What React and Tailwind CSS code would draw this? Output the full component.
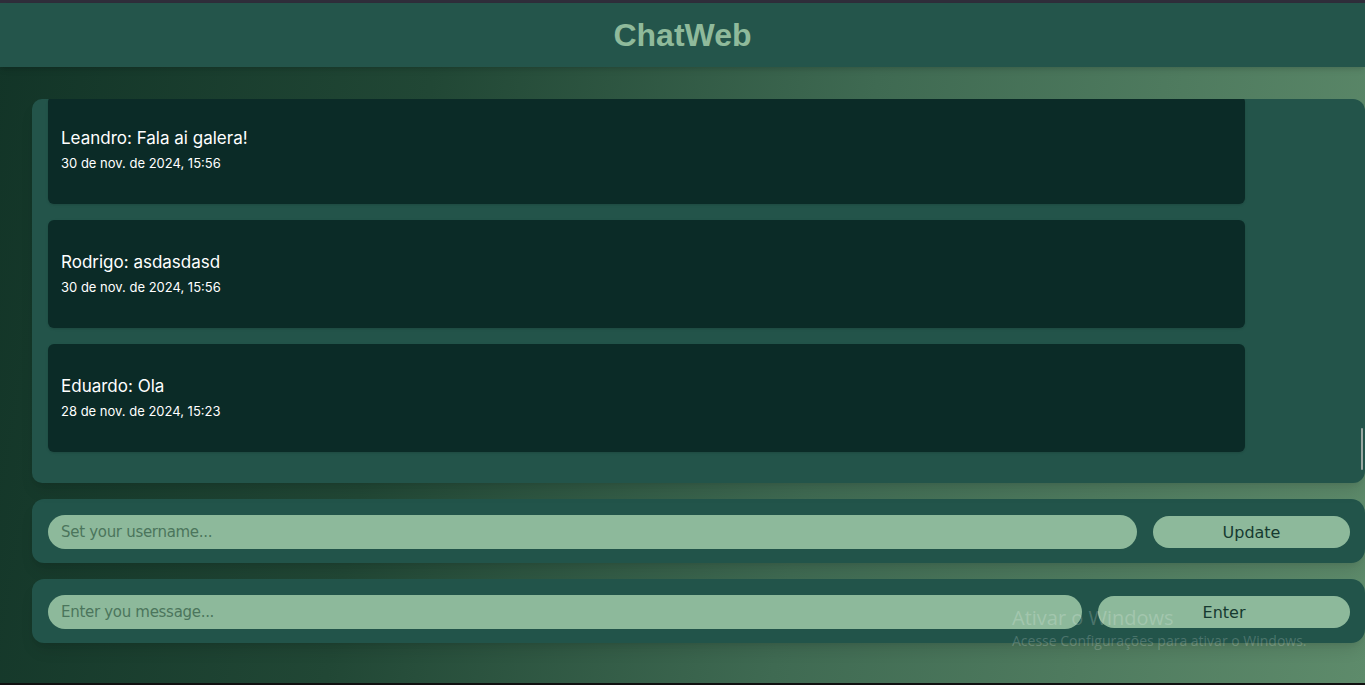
import { useState } from "react";

const messages = [
  { user: "Leandro", text: "Fala ai galera!", date: "30 de nov. de 2024, 15:56" },
  { user: "Rodrigo", text: "asdasdasd", date: "30 de nov. de 2024, 15:56" },
  { user: "Eduardo", text: "Ola", date: "28 de nov. de 2024, 15:23" },
];

export default function App() {
  const [username, setUsername] = useState("");
  const [message, setMessage] = useState("");

  return (
    <div className="relative h-screen flex flex-col overflow-hidden bg-[linear-gradient(100deg,#123427_0%,#214735_30%,#3f6a52_60%,#5e8b6b_100%)]">
      <div className="h-[3px] bg-[#2f2d3a]" />
      <header className="h-[64px] bg-[#24554b] flex items-center justify-center shadow-md">
        <h1
          className="text-[32px] font-bold text-[#8fba9b]"
          style={{ fontFamily: '"Liberation Sans", Arial, sans-serif' }}
        >
          ChatWeb
        </h1>
      </header>

      <main className="flex-1 flex flex-col gap-4 pl-8 pt-8">
        <section className="relative h-[384px] bg-[#23544a] rounded-l-[10px] rounded-r-[12px] overflow-hidden shadow-lg">
          <div className="flex flex-col gap-4 pl-4 -mt-[3px]">
            {messages.map((m) => (
              <div
                key={m.user}
                className="w-[1197px] h-[108px] bg-[#0b2b27] rounded-md flex flex-col justify-center gap-[5px] px-[13px] shadow"
                style={{ fontFamily: "Inter, sans-serif" }}
              >
                <p className="text-[17px] text-white leading-5">
                  {m.user}: {m.text}
                </p>
                <p className="text-[13px] text-white leading-5">{m.date}</p>
              </div>
            ))}
          </div>
          <div className="absolute right-[2px] bottom-[13px] w-[2px] h-[42px] bg-[#9aa8a2] rounded" />
        </section>

        <section
          className="h-[64px] bg-[#22544a] rounded-l-[12px] rounded-r-[14px] flex items-center gap-4 pl-4 pr-[15px] shadow-lg"
          style={{ fontFamily: '"DejaVu Sans", Tahoma, sans-serif' }}
        >
          <input
            value={username}
            onChange={(e) => setUsername(e.target.value)}
            placeholder="Set your username..."
            className="flex-1 h-[34px] mt-[2px] rounded-full bg-[#8db99b] px-[13px] text-[15px] tracking-[-0.3px] text-[#163a30] placeholder:text-[#4b755c] outline-none"
          />
          <button className="w-[197px] h-[32px] mt-[1px] pt-[2px] rounded-full bg-[#8db99b] text-[16px] text-[#163a30]">
            Update
          </button>
        </section>

        <section
          className="h-[64px] bg-[#22544a] rounded-l-[12px] rounded-r-[14px] flex items-center gap-4 pl-4 pr-[15px] shadow-lg"
          style={{ fontFamily: '"DejaVu Sans", Tahoma, sans-serif' }}
        >
          <input
            value={message}
            onChange={(e) => setMessage(e.target.value)}
            placeholder="Enter you message..."
            className="flex-1 h-[34px] mt-[2px] rounded-full bg-[#8db99b] px-[13px] text-[15px] tracking-[-0.3px] text-[#163a30] placeholder:text-[#4b755c] outline-none"
          />
          <button className="w-[252px] h-[32px] mt-[1px] pt-[2px] rounded-full bg-[#8db99b] text-[16px] text-[#163a30]">
            Enter
          </button>
        </section>
      </main>

      <div className="h-[2px] bg-[#111]" />

      <div
        className="absolute left-[1012px] top-[606px] text-white/20 pointer-events-none"
        style={{ fontFamily: '"Open Sans", sans-serif' }}
      >
        <p className="text-[20px] leading-6">Ativar o Windows</p>
        <p className="text-[14px] leading-5 mt-[1px]">Acesse Configurações para ativar o Windows.</p>
      </div>
    </div>
  );
}
